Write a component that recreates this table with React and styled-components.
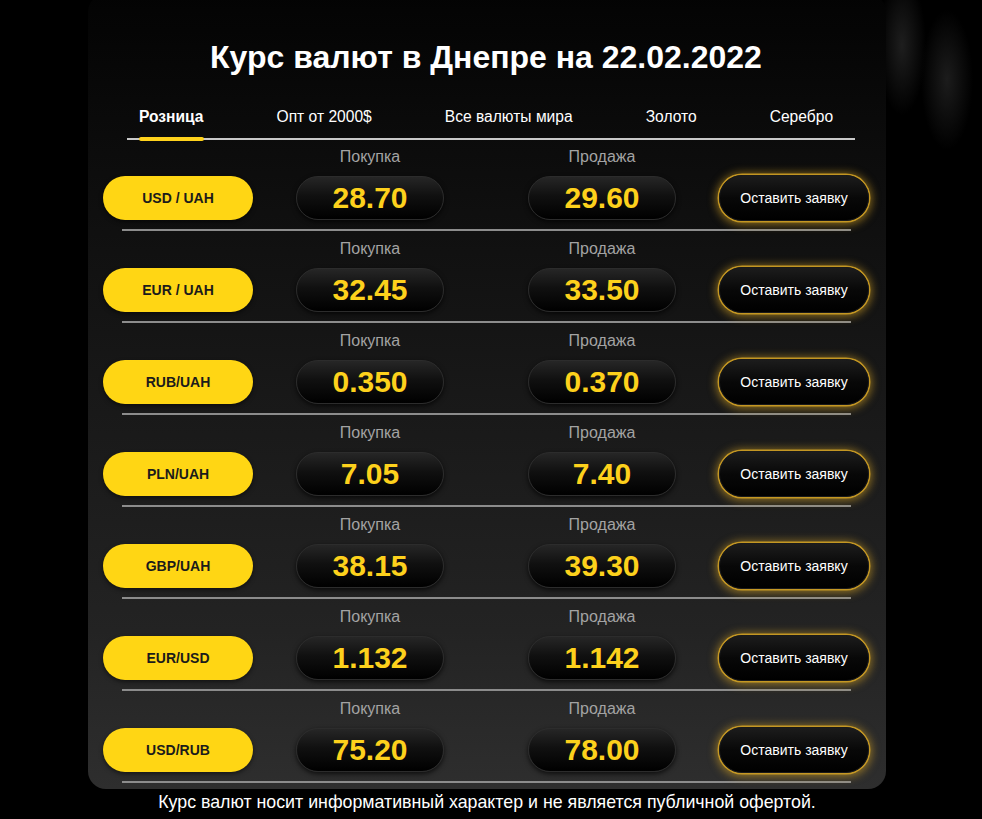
import React from 'react';
import styled, { createGlobalStyle } from 'styled-components';

const GlobalStyle = createGlobalStyle`
  html, body {
    margin: 0;
    padding: 0;
  }
  body {
    min-height: 819px;
    font-family: "Liberation Sans", Arial, sans-serif;
    color: #fff;
    background:
      radial-gradient(ellipse 24px 70px at 902px 45px, #1e1e1e 0%, rgba(0,0,0,0) 100%),
      radial-gradient(ellipse 26px 70px at 947px 80px, #1c1c1c 0%, rgba(0,0,0,0) 100%),
      #000;
  }
`;

const RATES = [
  { pair: 'USD / UAH', buy: '28.70', sell: '29.60' },
  { pair: 'EUR / UAH', buy: '32.45', sell: '33.50' },
  { pair: 'RUB/UAH', buy: '0.350', sell: '0.370' },
  { pair: 'PLN/UAH', buy: '7.05', sell: '7.40' },
  { pair: 'GBP/UAH', buy: '38.15', sell: '39.30' },
  { pair: 'EUR/USD', buy: '1.132', sell: '1.142' },
  { pair: 'USD/RUB', buy: '75.20', sell: '78.00' },
];

const TABS = ['Розница', 'Опт от 2000$', 'Все валюты мира', 'Золото', 'Серебро'];

const Page = styled.div`
  width: 798px;
  margin-left: 88px;
`;

const Panel = styled.section`
  margin-top: -6px;
  padding: 44px 17px 6px 15px;
  border-radius: 18px;
  background: linear-gradient(180deg, #030303 0%, #0c0c0c 20%, #181818 50%, #232323 80%, #2e2e2e 100%);
`;

const Title = styled.h1`
  margin: 0;
  font-size: 32px;
  line-height: 38px;
  font-weight: 700;
  text-align: center;
  color: #fff;
`;

const TabBar = styled.nav`
  display: flex;
  gap: 73px;
  margin: 32px 14px 7px 24px;
  padding-left: 12px;
  border-bottom: 2px solid #c9c9c9;
`;

const Tab = styled.div`
  position: relative;
  padding-bottom: 12px;
  font-size: 15.6px;
  line-height: 18px;
  font-weight: ${p => (p.$active ? 700 : 400)};
  color: #fff;
  white-space: nowrap;

  &::after {
    content: '';
    display: ${p => (p.$active ? 'block' : 'none')};
    position: absolute;
    left: 0;
    right: 0;
    bottom: -3px;
    height: 4px;
    border-radius: 2px;
    background: #ffd21c;
  }
`;

const Row = styled.div`
  display: grid;
  grid-template-columns: 193px 232px 191px 150px;
  grid-template-rows: 20px 44px;
  row-gap: 9px;
  align-items: center;
`;

const Label = styled.div`
  grid-row: 1;
  grid-column: ${p => p.$col};
  width: 148px;
  text-align: center;
  font-size: 16px;
  line-height: 20px;
  color: #a3a3a3;
`;

const PairPill = styled.div`
  grid-row: 2;
  grid-column: 1;
  width: 150px;
  height: 44px;
  border-radius: 22px;
  background: #ffd614;
  display: flex;
  align-items: center;
  justify-content: center;
  font-size: 14px;
  font-weight: 700;
  color: #1b1b1b;
  box-shadow: 0 2px 4px rgba(0, 0, 0, 0.5);
`;

const ValuePill = styled.div`
  grid-row: 2;
  grid-column: ${p => p.$col};
  width: 148px;
  height: 44px;
  box-sizing: border-box;
  border-radius: 22px;
  border: 1px solid #2c2c2c;
  background: linear-gradient(180deg, #262626 0%, #101010 45%, #000 100%);
  display: flex;
  align-items: center;
  justify-content: center;
  font-size: 30px;
  font-weight: 700;
  color: #fdd11c;
  box-shadow: 0 2px 5px rgba(0, 0, 0, 0.7);
`;

const OrderButton = styled.button`
  grid-row: 2;
  grid-column: 4;
  width: 150px;
  height: 46px;
  border-radius: 23px;
  border: 1px solid #1a1a1a;
  background: linear-gradient(180deg, #1c1c1c 0%, #080808 50%, #000 100%);
  font-family: inherit;
  font-size: 14px;
  color: #fff;
  cursor: pointer;
  box-shadow:
    0 0 0 1.5px rgba(206, 158, 36, 0.9),
    0 1px 8px 3px rgba(206, 158, 36, 0.6);
`;

const Divider = styled.hr`
  margin: 9px 18px 8px 19px;
  border: 0;
  height: 2px;
  background: #8c8c8c;

  &:last-child {
    margin-bottom: 0;
  }
`;

const Note = styled.p`
  margin: 3px 0 0;
  text-align: center;
  font-size: 17.8px;
  line-height: 20px;
  color: #fff;
`;

function RateRow({ pair, buy, sell }) {
  return (
    <>
      <Row>
        <Label $col={2}>Покупка</Label>
        <Label $col={3}>Продажа</Label>
        <PairPill>{pair}</PairPill>
        <ValuePill $col={2}>{buy}</ValuePill>
        <ValuePill $col={3}>{sell}</ValuePill>
        <OrderButton>Оставить заявку</OrderButton>
      </Row>
      <Divider />
    </>
  );
}

export default function App() {
  return (
    <Page>
      <GlobalStyle />
      <Panel>
        <Title>Курс валют в Днепре на 22.02.2022</Title>
        <TabBar>
          {TABS.map((t, i) => (
            <Tab key={t} $active={i === 0}>{t}</Tab>
          ))}
        </TabBar>
        {RATES.map(r => (
          <RateRow key={r.pair} {...r} />
        ))}
      </Panel>
      <Note>Курс валют носит информативный характер и не является публичной офертой.</Note>
    </Page>
  );
}
